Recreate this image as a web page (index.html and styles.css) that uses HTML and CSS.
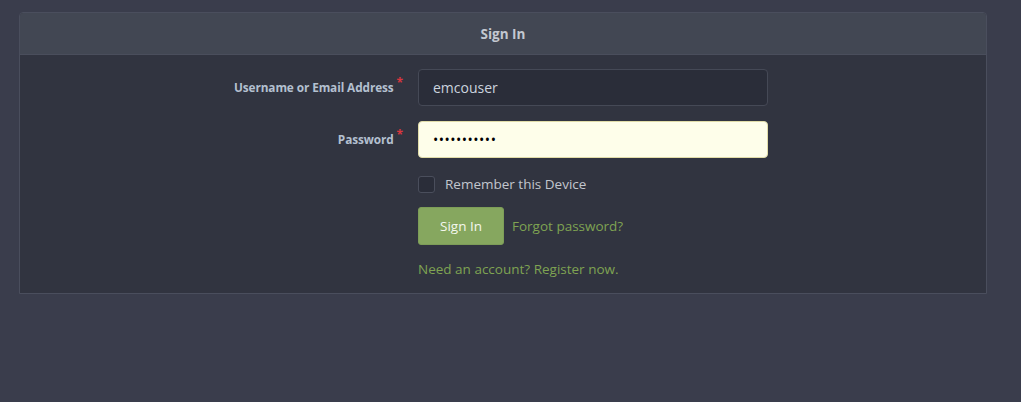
FILE: index.html
```html
<!DOCTYPE html>
<html lang="en">
<head>
<meta charset="utf-8">
<title>Sign In</title>
<link rel="stylesheet" href="styles.css">
</head>
<body>
<div class="page">
  <div class="card">
    <div class="card-header">Sign In</div>
    <div class="card-body">
      <form class="form">
        <label class="label" for="user">Username or Email Address<span class="req">*</span></label>
        <input class="input" id="user" type="text" value="emcouser">
        <label class="label" for="pass">Password<span class="req">*</span></label>
        <input class="input input-autofill" id="pass" type="password" value="emcouser123">
        <div></div>
        <label class="check-row"><span class="checkbox"></span><span class="check-text">Remember this Device</span></label>
        <div></div>
        <div class="actions"><button type="button" class="btn">Sign In</button><a class="link" href="#">Forgot password?</a></div>
        <div></div>
        <a class="link register" href="#">Need an account? Register now.</a>
      </form>
    </div>
  </div>
</div>
</body>
</html>
```

FILE: styles.css
```css
* { box-sizing: border-box; }
html, body { margin: 0; padding: 0; }
body {
  background: #3a3d4c;
  font-family: "Open Sans", "Noto Sans", "Liberation Sans", sans-serif;
  width: 1021px;
  height: 402px;
  overflow: hidden;
}
.page { padding: 12px 34px 0 19px; }
.card {
  width: 968px;
  border: 1px solid #4a4e5d;
  border-radius: 4px 4px 0 0;
  background: #313440;
}
.card-header {
  height: 42px;
  background: #424753;
  border-bottom: 1px solid #4a4e5c;
  border-radius: 3px 3px 0 0;
  color: #c3c8d0;
  font-weight: 700;
  font-size: 13.5px;
  display: flex;
  align-items: center;
  justify-content: center;
}
.card-body { padding: 14px 0 15px; }
.form {
  display: grid;
  grid-template-columns: 398px 350px;
  row-gap: 15px;
  align-items: center;
}
.label {
  text-align: right;
  padding-right: 15px;
  color: #b4c0d0;
  font-weight: 700;
  font-size: 11.8px;
  letter-spacing: -0.1px;
}
.req {
  color: #d9363e;
  font-size: 12px;
  position: relative;
  top: -5px;
  margin-left: 3px;
}
.input {
  height: 37px;
  width: 350px;
  border: 1px solid #454956;
  border-radius: 4px;
  background: #2a2d39;
  color: #cbd3df;
  font-family: inherit;
  font-size: 14px;
  padding: 0 14px;
  outline: none;
}
.input-autofill {
  background: #fefeea;
  border-color: #e0dca8;
  color: #000;
  letter-spacing: 0.5px;
}
.check-row {
  display: flex;
  align-items: center;
  gap: 10px;
  height: 16px;
  margin-top: 3px;
}
.checkbox {
  width: 17px;
  height: 17px;
  border: 1px solid #4a4e5c;
  border-radius: 3px;
  background: #2a2d39;
}
.check-text { color: #c2c6ce; font-size: 13.5px; }
.actions { display: flex; align-items: center; gap: 8px; margin-top: 0; }
.btn {
  width: 86px;
  height: 38px;
  border: 1px solid #7d9d58;
  border-radius: 3px;
  background: #86a75f;
  color: #f4f7ee;
  font-family: inherit;
  font-size: 13.5px;
  padding: 0;
}
.link {
  color: #7fa352;
  font-size: 13.5px;
  text-decoration: none;
}
.register { margin-top: 0; }
```
